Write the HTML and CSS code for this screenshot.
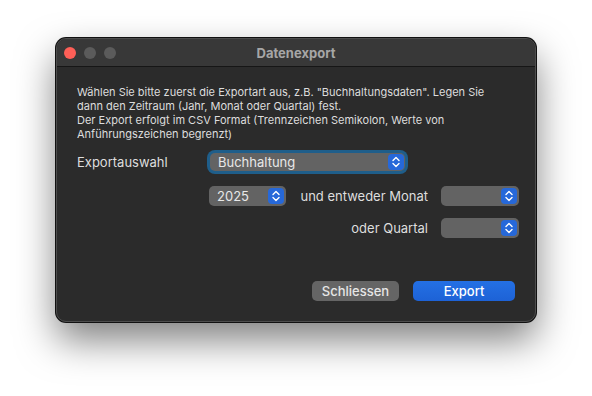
FILE: index.html
```html
<!DOCTYPE html>
<html lang="de">
<head>
  <meta charset="UTF-8">
  <title>Datenexport</title>
  <link rel="stylesheet" href="styles.css">
</head>
<body>
  <div class="window">
    <div class="titlebar">
      <div class="lights">
        <span class="light red"></span>
        <span class="light"></span>
        <span class="light"></span>
      </div>
      <div class="title">Datenexport</div>
    </div>

    <div class="content">
      <p class="info">
        Wählen Sie bitte zuerst die Exportart aus, z.B. "Buchhaltungsdaten". Legen Sie<br>
        dann den Zeitraum (Jahr, Monat oder Quartal) fest.<br>
        Der Export erfolgt im CSV Format (Trennzeichen Semikolon, Werte von<br>
        Anführungszeichen begrenzt)
      </p>

      <div class="row row-first">
        <span class="label">Exportauswahl</span>
        <div class="popup popup-wide focused">
          <span class="value">Buchhaltung</span>
          <span class="chev"><svg width="12" height="14" viewBox="0 0 12 14"><path d="M3 5.5 L6 2.5 L9 5.5 M3 8.5 L6 11.5 L9 8.5" fill="none" stroke="#fff" stroke-width="1.4" stroke-linecap="round" stroke-linejoin="round"/></svg></span>
        </div>
      </div>

      <div class="row">
        <div class="spacer"></div>
        <div class="popup popup-year">
          <span class="value">2025</span>
          <span class="chev"><svg width="12" height="14" viewBox="0 0 12 14"><path d="M3 5.5 L6 2.5 L9 5.5 M3 8.5 L6 11.5 L9 8.5" fill="none" stroke="#fff" stroke-width="1.4" stroke-linecap="round" stroke-linejoin="round"/></svg></span>
        </div>
        <span class="label label-right">und entweder Monat</span>
        <div class="popup popup-small">
          <span class="value"></span>
          <span class="chev"><svg width="12" height="14" viewBox="0 0 12 14"><path d="M3 5.5 L6 2.5 L9 5.5 M3 8.5 L6 11.5 L9 8.5" fill="none" stroke="#fff" stroke-width="1.4" stroke-linecap="round" stroke-linejoin="round"/></svg></span>
        </div>
      </div>

      <div class="row">
        <span class="label label-right">oder Quartal</span>
        <div class="popup popup-small">
          <span class="value"></span>
          <span class="chev"><svg width="12" height="14" viewBox="0 0 12 14"><path d="M3 5.5 L6 2.5 L9 5.5 M3 8.5 L6 11.5 L9 8.5" fill="none" stroke="#fff" stroke-width="1.4" stroke-linecap="round" stroke-linejoin="round"/></svg></span>
        </div>
      </div>

      <div class="buttons">
        <button class="btn">Schliessen</button>
        <button class="btn btn-primary">Export</button>
      </div>
    </div>
  </div>
</body>
</html>
```

FILE: styles.css
```css
html { height: 100%; }
body {
  margin: 0;
  min-height: 100%;
  box-sizing: border-box;
  background: #fff;
  font-family: Inter, "Noto Sans", sans-serif;
  padding: 38px 0 0 56px;
}
.window {
  width: 478px;
  height: 282px;
  background: #2b2b2b;
  border: 1px solid #4d4d4d;
  border-radius: 10px;
  box-shadow: 0 0 0 1px #111, 0 18px 38px rgba(0, 0, 0, 0.5);
  overflow: hidden;
}
.titlebar {
  height: 27px;
  background: #383838;
  border-bottom: 1px solid #161616;
  display: flex;
  align-items: center;
  position: relative;
}
.lights {
  display: flex;
  gap: 8px;
  padding-left: 7px;
}
.light {
  width: 12px;
  height: 12px;
  border-radius: 50%;
  background: #5b5b5b;
}
.light.red { background: #fe5f57; }
.title {
  position: absolute;
  left: 0;
  right: 0;
  text-align: center;
  font-size: 13px;
  font-weight: 700;
  color: #a6a6a6;
}
.content {
  padding: 18px 16px 0 20px;
}
.info {
  margin: 0;
  font-size: 11px;
  line-height: 14px;
  color: #dddddd;
}
.row {
  display: flex;
  align-items: center;
  height: 20px;
  margin-top: 12px;
  font-size: 13px;
  color: #dedede;
}
.row-first {
  height: 24px;
  margin-top: 9px;
}
.label {
  width: 133px;
}
.label-right {
  flex: 1;
  text-align: right;
  padding-right: 13px;
}
.spacer { width: 132px; }
.popup {
  height: 20px;
  background: #636363;
  border-radius: 5px;
  display: flex;
  align-items: center;
  justify-content: space-between;
  padding: 0 2px 0 8px;
  box-sizing: border-box;
  color: #e8e8e8;
}
.popup-wide {
  width: 195px;
  height: 18px;
  padding-right: 1px;
}
.focused {
  box-shadow: 0 0 0 3px #1f5e8a;
}
.popup-year { width: 77px; }
.popup-small { width: 78px; }
.chev {
  width: 16px;
  height: 16px;
  background: #2668d9;
  border-radius: 4px;
  display: flex;
  align-items: center;
  justify-content: center;
}
.buttons {
  display: flex;
  justify-content: flex-end;
  gap: 14px;
  margin-top: 43px;
  padding-right: 4px;
}
.btn {
  height: 20px;
  width: 87px;
  border: none;
  border-radius: 5px;
  background: #656565;
  color: #e6e6e6;
  font-family: Inter, "Noto Sans", sans-serif;
  font-size: 13px;
  font-weight: 500;
  padding: 0;
}
.btn-primary {
  width: 102px;
  background: linear-gradient(#2470e4, #1d62d6);
  color: #fff;
}
```
